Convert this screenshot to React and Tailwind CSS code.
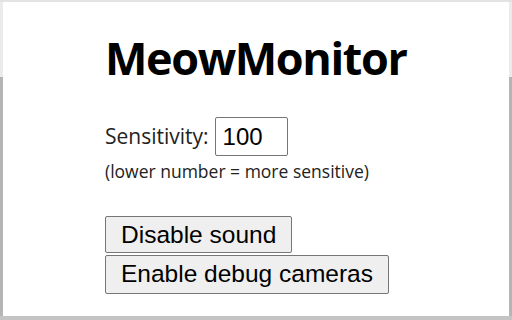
import React from 'react';

const App = () => {
  return (
    <div className="w-[512px] h-[320px] flex flex-col bg-white overflow-hidden">
      {/* top edge */}
      <div className="h-[2px] bg-[#e3e3e3]" />
      <div className="flex-1 flex">
        {/* left edge */}
        <div className="w-[3px] flex flex-col">
          <div className="h-[75px] bg-[#ebebeb]" />
          <div className="flex-1 bg-[#b5b5b5]" />
        </div>

        {/* popup body */}
        <div className="flex-1 pl-[102px] pt-[33px] font-['Open_Sans',sans-serif] text-black">
          <h1 className="text-[45px] leading-none font-bold tracking-[-1.4px]">MeowMonitor</h1>

          <div className="mt-[37px] flex items-center gap-[6px]">
            <span className="text-[21px] text-[#222]">Sensitivity:</span>
            <input
              type="text"
              defaultValue="100"
              className="w-[73px] h-[39px] px-[7px] border border-[#767676] rounded-[2px] text-[24px] font-['Liberation_Sans',sans-serif] text-black outline-none"
            />
          </div>
          <p className="mt-[2px] text-[17.5px] text-[#222]">(lower number = more sensitive)</p>

          <div className="mt-[32px] flex flex-col items-start gap-[2px] font-['Liberation_Sans',sans-serif]">
            <button className="h-[37px] px-[15px] bg-[#efefef] border border-[#767676] rounded-[2px] text-[24.5px] text-black">
              Disable sound
            </button>
            <button className="h-[39px] px-[15px] bg-[#efefef] border border-[#767676] rounded-[2px] text-[24.5px] text-black">
              Enable debug cameras
            </button>
          </div>
        </div>

        {/* right edge */}
        <div className="w-[3px] flex flex-col">
          <div className="h-[75px] bg-[#ebebeb]" />
          <div className="flex-1 bg-[#b5b5b5]" />
        </div>
      </div>
      {/* bottom edge */}
      <div className="h-[4px] bg-[#c4c4c4]" />
    </div>
  );
};

export default App;
